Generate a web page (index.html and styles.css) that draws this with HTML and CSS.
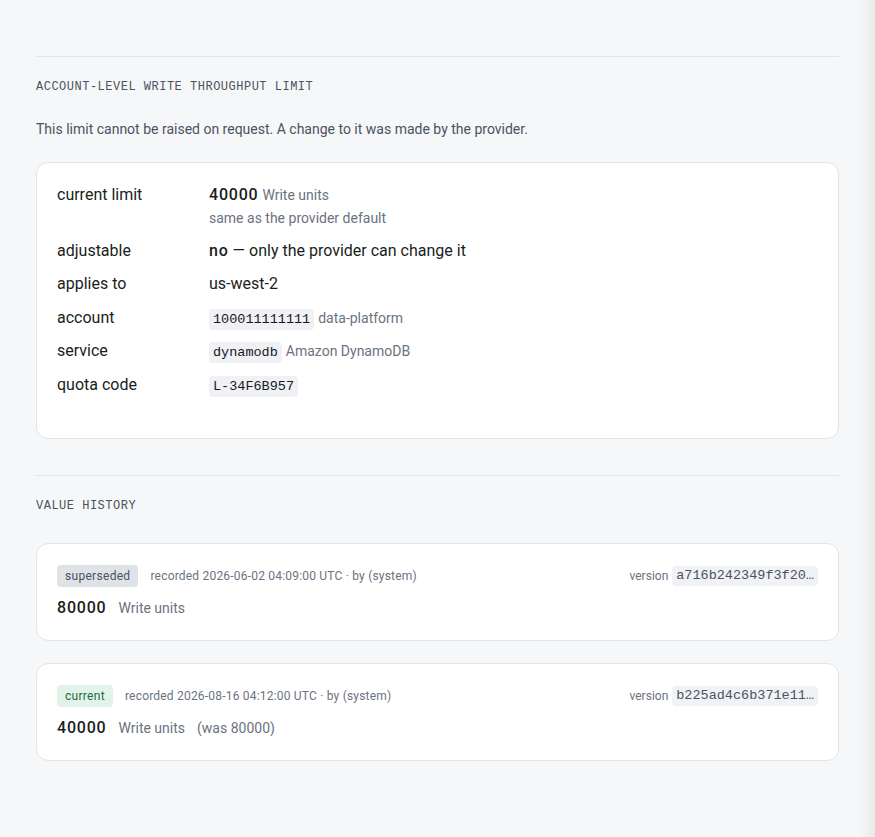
FILE: index.html
```html
<!DOCTYPE html>
<html lang="en">

<head>
    <meta charset="UTF-8">
    <meta name="viewport" content="width=device-width, initial-scale=1.0">
    <title>Write throughput limit</title>
    <link rel="stylesheet" href="styles.css">
</head>

<body>
    <!-- limit details -->
    <section class="section">
        <h2 class="section-title">Account-level write throughput limit</h2>
        <p class="section-note">This limit cannot be raised on request. A change to it was made by the provider.</p>

        <div class="card">
            <dl class="facts">
                <dt>current limit</dt>
                <dd>
                    <span class="num">40000</span> <span class="muted">Write units</span>
                    <div class="sub">same as the provider default</div>
                </dd>

                <dt>adjustable</dt>
                <dd><span class="num">no</span> — only the provider can change it</dd>

                <dt>applies to</dt>
                <dd>us-west-2</dd>

                <dt>account</dt>
                <dd><code>100011111111</code> <span class="muted">data-platform</span></dd>

                <dt>service</dt>
                <dd><code>dynamodb</code> <span class="muted">Amazon DynamoDB</span></dd>

                <dt>quota code</dt>
                <dd><code>L-34F6B957</code></dd>
            </dl>
        </div>
    </section>

    <!-- history of values -->
    <section class="section">
        <h2 class="section-title">Value history</h2>

        <div class="card entry">
            <div class="entry-head">
                <span class="badge badge-old">superseded</span>
                <span class="meta">recorded 2026-06-02 04:09:00 UTC · by (system)</span>
                <span class="version">version <code>a716b242349f3f20…</code></span>
            </div>
            <div class="entry-value">
                <span class="num">80000</span>
                <span class="muted">Write units</span>
            </div>
        </div>

        <div class="card entry">
            <div class="entry-head">
                <span class="badge badge-current">current</span>
                <span class="meta">recorded 2026-08-16 04:12:00 UTC · by (system)</span>
                <span class="version">version <code>b225ad4c6b371e11…</code></span>
            </div>
            <div class="entry-value">
                <span class="num">40000</span>
                <span class="muted">Write units</span>
                <span class="muted">(was 80000)</span>
            </div>
        </div>
    </section>
</body>

</html>
```

FILE: styles.css
```css
/* page */
body {
    font-family: Roboto, "Noto Sans", sans-serif;
    color: #1a1d21;
    background: linear-gradient(to right, #f6f7f9 calc(100% - 16px), #e9eaec);
    margin: 0;
    padding: 36px 36px 60px;
    min-height: 100vh;
    box-sizing: border-box;
}

code {
    font-family: "Liberation Mono", "DejaVu Sans Mono", monospace;
    font-size: 13.5px;
    line-height: 14px;
    background: #f0f1f4;
    border-radius: 4px;
    padding: 3px 4px;
    color: #16191d;
}

/* sections with a rule on top */
.section {
    border-top: 1px solid #e2e4e8;
    margin-top: 20px;
    padding-top: 22px;
    padding-bottom: 16px;
}

.section-title {
    font-family: "Liberation Mono", "DejaVu Sans Mono", monospace;
    font-size: 12px;
    font-weight: 400;
    line-height: 16px;
    letter-spacing: 0.5px;
    text-transform: uppercase;
    color: #4b5260;
    margin: 0 0 29px;
}

.section-title + .section-note {
    margin-top: -5px;
}

.section-note {
    font-size: 14px;
    line-height: 20px;
    color: #4b5260;
    margin: 0 0 23px;
}

/* white boxes */
.card {
    background: #fff;
    border: 1px solid #e2e4e8;
    border-radius: 12px;
    padding: 20px 20px 19px;
}

.card + .card {
    margin-top: 22px;
}

/* key / value list */
.facts {
    display: grid;
    grid-template-columns: 152px 1fr;
    row-gap: 9.5px;
    margin: 0 0 22px;
    font-size: 16px;
    line-height: 24px;
}

.facts dt {
    color: #1a1d21;
}

.facts dd {
    margin: 0;
}

.num {
    font-weight: 500;
    letter-spacing: 0.8px;
}

.muted {
    color: #6b7280;
    font-size: 14px;
}

.sub {
    font-size: 14px;
    line-height: 22px;
    color: #6b7280;
}

/* history entries */
.entry {
    padding: 21px 20px 20px;
}

.entry-head {
    display: flex;
    align-items: center;
    gap: 12px;
    font-size: 12px;
    color: #6b7280;
}

.meta {
    letter-spacing: 0.2px;
}

.badge {
    border-radius: 4px;
    padding: 3px 8px;
    line-height: 16px;
    letter-spacing: 0.3px;
}

.badge-old {
    background: #dfe2e7;
    color: #4b5260;
}

.badge-current {
    background: #e2f3e9;
    color: #1f6b42;
}

.version {
    margin-left: auto;
    display: flex;
    align-items: center;
    gap: 4px;
}

.version code {
    color: #4b5260;
    background: #f1f2f5;
}

.entry-value {
    display: flex;
    align-items: baseline;
    gap: 12px;
    margin-top: 9px;
    font-size: 16px;
    line-height: 24px;
}
```
